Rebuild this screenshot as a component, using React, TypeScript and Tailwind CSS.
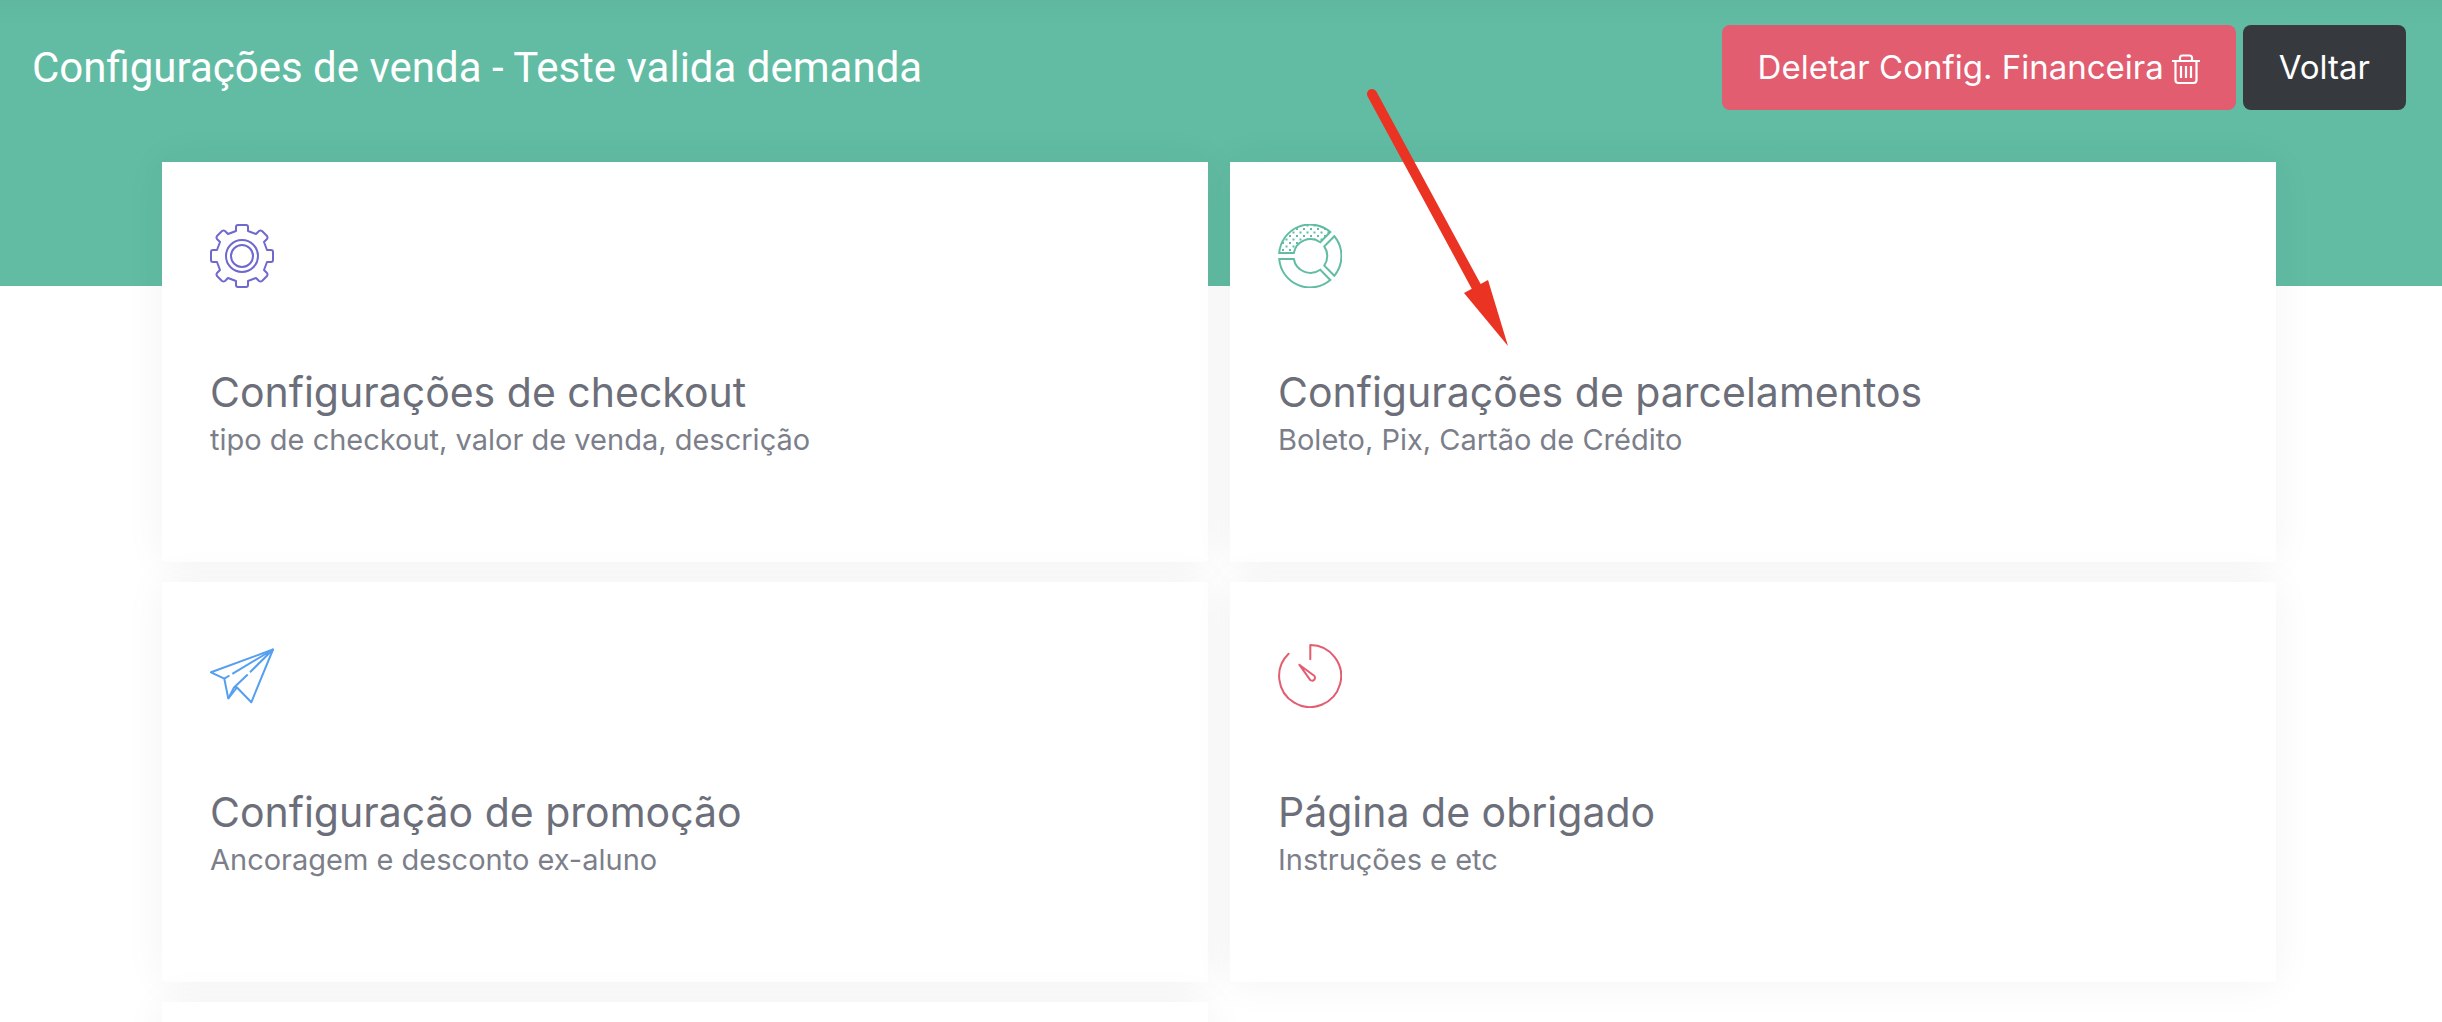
import React from "react";

const GearIcon = () => (
  <svg
    viewBox="0 0 64 64"
    className="size-16 text-[#6f69cd]"
    fill="none"
    stroke="currentColor"
    strokeWidth="2"
    strokeLinejoin="round"
    aria-hidden="true"
  >
    <path d="M28 1h8q2 0 2 2v4l8 3 3-3q1.500-1 3 0l5 5q1 1.500 0 3l-3 3 3 8h4q2 0 2 2v8q0 2-2 2h-4l-3 8 3 3q1 1.500 0 3l-5 5q-1.500 1-3 0l-3-3-8 3v4q0 2-2 2h-8q-2 0-2-2v-4l-8-3-3 3q-1.500 1-3 0l-5-5q-1-1.500 0-3l3-3-3-8H3q-2 0-2-2v-8q0-2 2-2h4l3-8-3-3q-1-1.500 0-3l5-5q1.500-1 3 0l3 3 8-3V3q0-2 2-2z" />
    <circle cx="32" cy="32" r="16" />
    <circle cx="32" cy="32" r="11" />
  </svg>
);

const ChartIcon = () => (
  <svg
    viewBox="0 0 64 64"
    className="size-16 text-[#61bca3]"
    fill="none"
    stroke="currentColor"
    strokeWidth="2"
    aria-hidden="true"
  >
    <defs>
      <pattern id="dots" width="7" height="7" patternUnits="userSpaceOnUse">
        <rect x="0.5" y="0.5" width="2" height="2" fill="#61bca3" stroke="none" />
        <rect x="4" y="4" width="2" height="2" fill="#61bca3" stroke="none" />
      </pattern>
    </defs>
    <path
      fill="url(#dots)"
      d="M1.200 29A31 31 0 0 1 52.300 8L42.300 18.200A17 17 0 0 0 15.800 29z"
    />
    <path d="M56.300 12.200A31 31 0 0 1 56.300 51.800L46.300 41.600A17 17 0 0 0 46.300 22.400z" />
    <path d="M1.200 35A31 31 0 0 0 52.300 56L42.300 45.800A17 17 0 0 1 15.800 35z" />
  </svg>
);

const PlaneIcon = () => (
  <svg
    viewBox="0 0 64 64"
    className="size-16 text-[#559ff0]"
    fill="none"
    stroke="currentColor"
    strokeWidth="2"
    strokeLinejoin="round"
    aria-hidden="true"
  >
    <path d="M19.500 31.500L14.300 34.700 1 28.300 63 5.500 41.300 58.300 27 43.500 18.300 54.500 14.300 34.700" />
    <path d="M22.300 29.800L63 5.500 40 28.200M37.700 30.500L24 43.500 18.300 54.500M24 43.500h3" />
  </svg>
);

const TimerIcon = () => (
  <svg
    viewBox="0 0 64 64"
    className="size-16 text-[#e25d70]"
    fill="none"
    stroke="currentColor"
    strokeWidth="2"
    strokeLinecap="round"
    strokeLinejoin="round"
    aria-hidden="true"
  >
    <path d="M32.300 15.300V1A31 31 0 1 1 10.600 9.700" />
    <path d="M21.300 20.700L35.500 31.200A2.900 2.900 0 1 1 31.600 35.200z" />
  </svg>
);

const TrashIcon = () => (
  <svg
    viewBox="0 0 28 31"
    className="mt-1 h-[31px] w-7"
    fill="none"
    stroke="currentColor"
    strokeWidth="2.2"
    aria-hidden="true"
  >
    <path d="M0 7h28M8 7V4q0-2.500 2.500-2.500h7Q20 1.500 20 4v3M3.500 7v19q0 3 3 3h15q3 0 3-3V7M9 12v12M14 12v12M19 12v12" />
  </svg>
);

const cards = [
  {
    title: "Configurações de checkout",
    description: "tipo de checkout, valor de venda, descrição",
    icon: <GearIcon />,
  },
  {
    title: "Configurações de parcelamentos",
    description: "Boleto, Pix, Cartão de Crédito",
    icon: <ChartIcon />,
  },
  {
    title: "Configuração de promoção",
    description: "Ancoragem e desconto ex-aluno",
    icon: <PlaneIcon />,
  },
  {
    title: "Página de obrigado",
    description: "Instruções e etc",
    icon: <TimerIcon />,
  },
];

const cardClass =
  "block min-h-[400px] bg-white px-12 pt-[62px] shadow-[0_0_40px_rgba(0,0,0,0.05)]";

const App = () => {
  return (
    <div className="relative h-screen overflow-hidden bg-white font-['Inter',sans-serif]">
      {/* Header */}
      <header className="flex h-[286px] items-start justify-between bg-linear-to-b from-[#5fb79f] to-[#61bca3] to-[24px] pt-[25px] pr-9 pl-8 text-white">
        <h1 className="font-['Roboto',sans-serif] text-[42px] leading-[86px]">
          Configurações de venda - Teste valida demanda
        </h1>
        <div className="flex gap-[7px] text-[33px]">
          <button
            type="button"
            className="flex h-[85px] items-center gap-2 rounded-lg bg-[#e25d70] px-9"
          >
            Deletar Config. Financeira
            <TrashIcon />
          </button>
          <button
            type="button"
            className="h-[85px] rounded-lg bg-[#363a3e] px-9"
          >
            Voltar
          </button>
        </div>
      </header>

      {/* Cards */}
      <main className="-mt-[124px] grid grid-cols-2 gap-x-[22px] gap-y-5 pr-[166px] pl-[162px]">
        {cards.map((card) => (
          <a key={card.title} href="#" className={cardClass}>
            {card.icon}
            <h2 className="mt-[78px] text-[41px] leading-[52px] text-[#6c6f7a]">
              {card.title}
            </h2>
            <p className="text-[29px] leading-[44px] text-[#7c7f8a]">
              {card.description}
            </p>
          </a>
        ))}
        <div className={cardClass} />
      </main>

      {/* Arrow pointing at the installments card */}
      <svg
        viewBox="0 0 150 264"
        className="pointer-events-none absolute top-[84px] left-[1362px] h-[264px] w-[150px]"
        aria-hidden="true"
      >
        <path
          d="M10 10L114 202"
          stroke="#eb3323"
          strokeWidth="10"
          strokeLinecap="round"
        />
        <path d="M102 209L126 196L146 262z" fill="#eb3323" />
      </svg>
    </div>
  );
};

export default App;
